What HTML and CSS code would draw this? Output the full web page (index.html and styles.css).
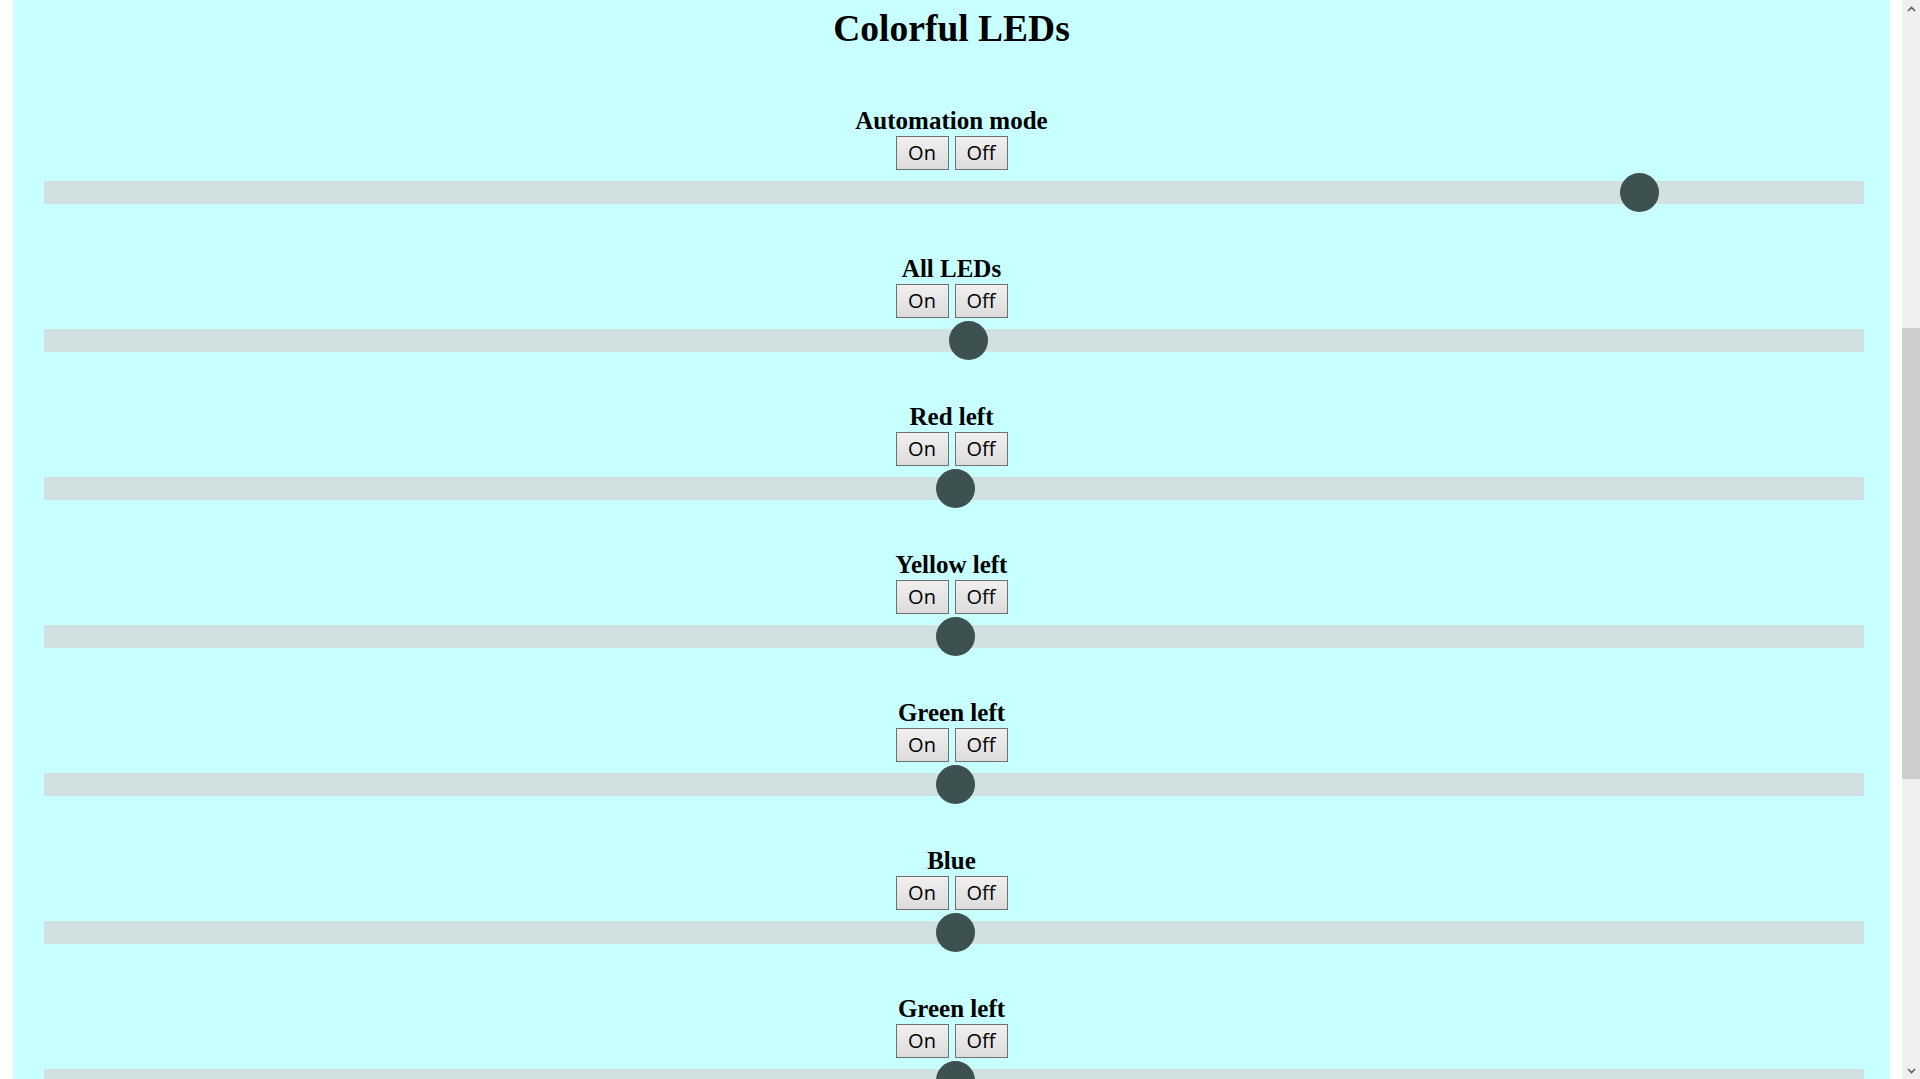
FILE: index.html
```html
<!DOCTYPE html>
<html lang="en">
<head>
<meta charset="utf-8">
<title>Colorful LEDs</title>
<link rel="stylesheet" href="styles.css">
</head>
<body>
<div class="page">
  <main class="panel">
    <h1 class="title">Colorful LEDs</h1>
    <div class="controls">
      <section class="control">
        <h3 class="label">Automation mode</h3>
        <div class="buttons"><button class="btn">On</button><button class="btn">Off</button></div>
        <input class="slider" type="range" min="0" max="1000" value="885">
      </section>
      <section class="control">
        <h3 class="label">All LEDs</h3>
        <div class="buttons"><button class="btn">On</button><button class="btn">Off</button></div>
        <input class="slider" type="range" min="0" max="1000" value="508">
      </section>
      <section class="control">
        <h3 class="label">Red left</h3>
        <div class="buttons"><button class="btn">On</button><button class="btn">Off</button></div>
        <input class="slider" type="range" min="0" max="1000" value="501">
      </section>
      <section class="control">
        <h3 class="label">Yellow left</h3>
        <div class="buttons"><button class="btn">On</button><button class="btn">Off</button></div>
        <input class="slider" type="range" min="0" max="1000" value="501">
      </section>
      <section class="control">
        <h3 class="label">Green left</h3>
        <div class="buttons"><button class="btn">On</button><button class="btn">Off</button></div>
        <input class="slider" type="range" min="0" max="1000" value="501">
      </section>
      <section class="control">
        <h3 class="label">Blue</h3>
        <div class="buttons"><button class="btn">On</button><button class="btn">Off</button></div>
        <input class="slider" type="range" min="0" max="1000" value="501">
      </section>
      <section class="control">
        <h3 class="label">Green left</h3>
        <div class="buttons"><button class="btn">On</button><button class="btn">Off</button></div>
        <input class="slider" type="range" min="0" max="1000" value="501">
      </section>
    </div>
  </main>
</div>
<div class="scrollbar" aria-hidden="true">
  <div class="sb-btn">
    <svg width="9" height="6" viewBox="0 0 9 6"><polyline points="1,5 4.5,1.5 8,5" fill="none" stroke="#606060" stroke-width="1.6"/></svg>
  </div>
  <div class="sb-track"><div class="sb-thumb"></div></div>
  <div class="sb-btn">
    <svg width="9" height="6" viewBox="0 0 9 6"><polyline points="1,1 4.5,4.5 8,1" fill="none" stroke="#606060" stroke-width="1.6"/></svg>
  </div>
</div>
</body>
</html>
```

FILE: styles.css
```css
html, body {
  margin: 0;
  padding: 0;
  height: 1079px;
  overflow: hidden;
  background: #ffffff;
}

body {
  display: flex;
  font-family: "Liberation Serif", "Times New Roman", serif;
}

.page {
  flex: 1;
  padding: 0 12px 0 13px;
  min-width: 0;
}

.panel {
  background: #c8ffff;
  height: 100%;
  display: flex;
  flex-direction: column;
  align-items: center;
}

.title {
  margin: 0;
  padding-top: 8px;
  font-size: 37.5px;
  line-height: 42px;
  font-weight: bold;
  color: #000;
}

.controls {
  margin-top: 57px;
  width: 100%;
  display: flex;
  flex-direction: column;
  gap: 43px;
}

.control {
  display: flex;
  flex-direction: column;
  align-items: center;
}

.label {
  margin: 0;
  font-size: 25px;
  line-height: 28px;
  font-weight: bold;
  color: #000;
}

.buttons {
  margin-top: 1px;
  display: flex;
  gap: 6px;
}

.btn {
  box-sizing: border-box;
  width: 53px;
  height: 34px;
  padding: 0;
  border: 1px solid #707070;
  border-radius: 0;
  background: linear-gradient(#f0f0f0, #dcdcdc);
  font-family: "Open Sans", "DejaVu Sans", sans-serif;
  font-size: 20px;
  color: #000;
  line-height: 32px;
}

.slider {
  -webkit-appearance: none;
  appearance: none;
  box-sizing: border-box;
  width: calc(100% - 57px);
  height: 39px;
  margin: 3px 26px 0 31px;
  padding: 0;
  background: transparent;
}

.slider::-webkit-slider-runnable-track {
  height: 23px;
  background: #d1e0e0;
  border: none;
}

.slider::-webkit-slider-thumb {
  -webkit-appearance: none;
  appearance: none;
  width: 39px;
  height: 39px;
  margin-top: -8px;
  border: none;
  border-radius: 50%;
  background: #3e5151;
}

.scrollbar {
  width: 18px;
  flex: 0 0 18px;
  background: #f0f0f0;
  display: flex;
  flex-direction: column;
}

.sb-btn {
  height: 17px;
  display: flex;
  align-items: center;
  justify-content: center;
}

.sb-track {
  flex: 1;
  padding-top: 311px;
}

.sb-thumb {
  height: 451px;
  background: #cdcdcd;
}
```
